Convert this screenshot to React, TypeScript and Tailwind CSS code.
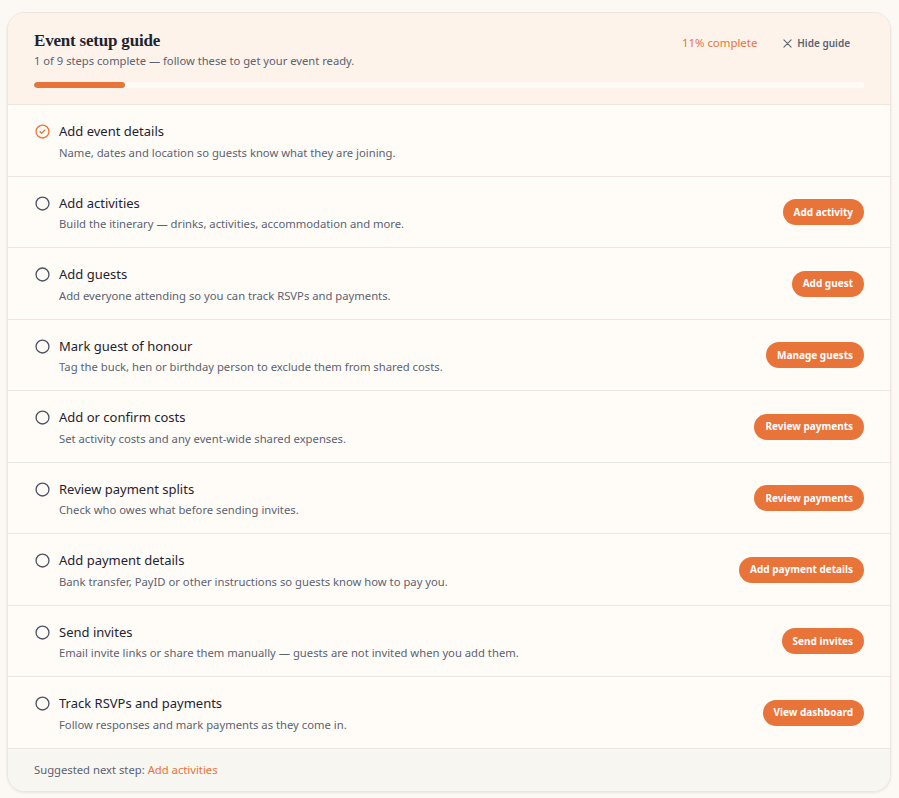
import React from "react";

type Step = { title: string; desc: string; action?: string; done?: boolean };

const steps: Step[] = [
  { title: "Add event details", desc: "Name, dates and location so guests know what they are joining.", done: true },
  { title: "Add activities", desc: "Build the itinerary — drinks, activities, accommodation and more.", action: "Add activity" },
  { title: "Add guests", desc: "Add everyone attending so you can track RSVPs and payments.", action: "Add guest" },
  { title: "Mark guest of honour", desc: "Tag the buck, hen or birthday person to exclude them from shared costs.", action: "Manage guests" },
  { title: "Add or confirm costs", desc: "Set activity costs and any event-wide shared expenses.", action: "Review payments" },
  { title: "Review payment splits", desc: "Check who owes what before sending invites.", action: "Review payments" },
  { title: "Add payment details", desc: "Bank transfer, PayID or other instructions so guests know how to pay you.", action: "Add payment details" },
  { title: "Send invites", desc: "Email invite links or share them manually — guests are not invited when you add them.", action: "Send invites" },
  { title: "Track RSVPs and payments", desc: "Follow responses and mark payments as they come in.", action: "View dashboard" },
];

function CheckCircle() {
  return (
    <svg width="15" height="15" viewBox="0 0 16 16" fill="none">
      <circle cx="8" cy="8" r="6.9" stroke="#e8743a" strokeWidth="1.4" />
      <path d="M5.4 8.2 L7.2 9.9 L10.6 6.3" stroke="#e8743a" strokeWidth="1.4" strokeLinecap="round" strokeLinejoin="round" />
    </svg>
  );
}

function EmptyCircle() {
  return (
    <svg width="15" height="15" viewBox="0 0 16 16" fill="none">
      <circle cx="8" cy="8" r="6.9" stroke="#4b5262" strokeWidth="1.4" />
    </svg>
  );
}

export default function App() {
  return (
    <div
      className="min-h-[798px] w-full bg-[#fcf9f4] pt-[12px] pl-[7px] pr-[8px]"
      style={{ fontFamily: '"Noto Sans", "Open Sans", sans-serif' }}
    >
      <div className="overflow-hidden rounded-[18px] border border-[#ebe7e0] bg-[#fffcf8] shadow-[0_1px_3px_rgba(0,0,0,0.08)]">
        {/* Header */}
        <div className="border-b border-[#ece6de] bg-[#fdf3ea] px-[26px] pt-[17px] pb-[16px]">
          <div className="flex items-start justify-between">
            <div>
              <h1
                className="text-[17px] font-bold leading-[22px] tracking-[-0.2px] text-[#1e2331]"
                style={{ fontFamily: '"Liberation Serif", "DejaVu Serif", serif' }}
              >
                Event setup guide
              </h1>
              <p className="mt-[0px] text-[11.2px] leading-[18px] text-[#5b6272]">
                1 of 9 steps complete — follow these to get your event ready.
              </p>
            </div>
            <div className="mt-[4px] flex items-center">
              <span className="text-[11.4px] leading-[18px] text-[#e8743a]">11% complete</span>
              <button className="ml-[26px] mr-[14px] flex items-center gap-[5px] text-[10px] font-semibold leading-[18px] text-[#5b6272]">
                <svg width="9" height="9" viewBox="0 0 10 10" fill="none">
                  <path d="M1 1 L9 9 M9 1 L1 9" stroke="#5b6272" strokeWidth="1.2" strokeLinecap="round" />
                </svg>
                Hide guide
              </button>
            </div>
          </div>
          <div className="mt-[12px] h-[6px] w-full overflow-hidden rounded-full bg-[#fffaf4]">
            <div className="h-full rounded-full bg-[#e8743a]" style={{ width: "11%" }} />
          </div>
        </div>

        {/* Steps */}
        <ul>
          {steps.map((s, i) => (
            <li
              key={i}
              className="flex items-center justify-between border-b border-[#ece8e1] pl-[26px] pr-[26px] py-[15px]"
            >
              <div className="flex items-start">
                <div className="mt-[4px] mr-[9px] flex h-[15px] w-[16px] items-center justify-center">
                  {s.done ? <CheckCircle /> : <EmptyCircle />}
                </div>
                <div>
                  <div className="pt-[1px] text-[13px] leading-[20px] text-[#1e2331]">{s.title}</div>
                  <div className="mt-[2.5px] text-[11.25px] leading-[17px] text-[#5b6272]">{s.desc}</div>
                </div>
              </div>
              {s.action && (
                <button className="mt-[1px] h-[26px] rounded-full bg-[#e8743a] px-[11px] text-[10px] font-bold text-white">
                  {s.action}
                </button>
              )}
            </li>
          ))}
        </ul>

        {/* Footer */}
        <div className="bg-[#f8f6f1] px-[26px] py-[12px] text-[11.25px] leading-[18px] text-[#5b6272]">
          Suggested next step: <span className="text-[#e8743a]">Add activities</span>
        </div>
      </div>
    </div>
  );
}
